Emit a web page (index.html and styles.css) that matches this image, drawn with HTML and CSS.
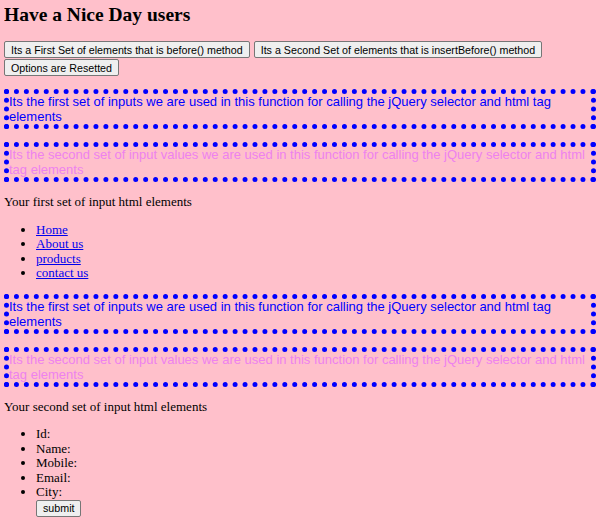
FILE: index.html
```html
<!DOCTYPE html>
<html>
	<head>
		<title>Have a Nice Day users</title>
		<link rel="stylesheet" href="styles.css">
	</head>
	<body>
		<h2 class="page-title">Have a Nice Day users</h2>
		<div class="actions">
			<button class="action-button">Its a First Set of elements that is before() method</button>
			<button class="action-button">Its a Second Set of elements that is insertBefore() method</button>
			<button class="action-button">Options are Resetted</button>
		</div>

		<p class="note note-first">Its the first set of inputs we are used in this function for calling the jQuery selector and html tag elements</p>
		<p class="note note-second">Its the second set of input values we are used in this function for calling the jQuery selector and html tag elements</p>
		<p class="plain">Your first set of input html elements</p>
		<ul class="item-list">
			<li><a href="#">Home</a></li>
			<li><a href="#">About us</a></li>
			<li><a href="#">products</a></li>
			<li><a href="#">contact us</a></li>
		</ul>

		<p class="note note-first">Its the first set of inputs we are used in this function for calling the jQuery selector and html tag elements</p>
		<p class="note note-second">Its the second set of input values we are used in this function for calling the jQuery selector and html tag elements</p>
		<p class="plain">Your second set of input html elements</p>
		<ul class="item-list">
			<li>Id:</li>
			<li>Name:</li>
			<li>Mobile:</li>
			<li>Email:</li>
			<li>City:<br><button class="action-button">submit</button></li>
		</ul>
	</body>
</html>
```

FILE: styles.css
```css
body {
    margin: 0 6px 0 4px;
    background-color: pink;
    font-family: "Liberation Serif", "Times New Roman", serif;
    font-size: 13px;
    line-height: 14.5px;
    color: #000;
}

h2.page-title {
    margin: 4px 0 15px 0;
    font-size: 19.5px;
    line-height: 22px;
    font-weight: bold;
}

div.actions {
    display: flex;
    flex-wrap: wrap;
    gap: 1px 4px;
}

button.action-button {
    height: 17px;
    padding: 0 6px;
    font-family: "Liberation Sans", Arial, sans-serif;
    font-size: 10.7px;
    color: #000;
    background-color: #efefef;
    border: 1px solid #767676;
    border-radius: 2px;
}

p.note {
    margin: 13px 0;
    border: 5px dotted blue;
    font-family: "Liberation Sans", Arial, sans-serif;
    font-size: 13px;
    line-height: 15px;
}

p.note-first {
    color: blue;
}

p.note-second {
    color: violet;
}

p.plain {
    margin: 13px 0;
}

ul.item-list {
    margin: 13px 0;
    padding-left: 32px;
}

ul.item-list a {
    color: #0000ee;
}
```
